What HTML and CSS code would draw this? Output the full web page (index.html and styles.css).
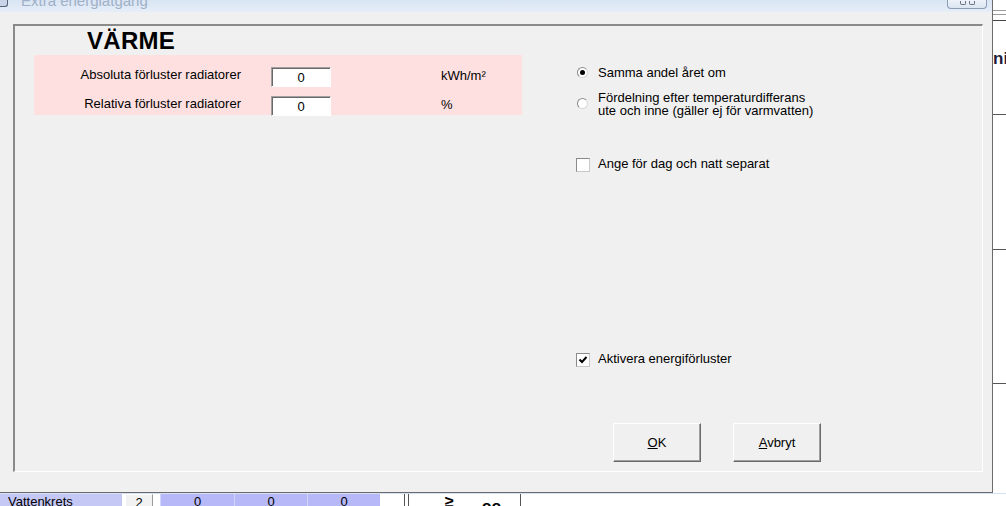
FILE: index.html
```html
<!DOCTYPE html>
<html>

<head>
	<title>Extra energiåtgång</title>
	<link rel="stylesheet" href="styles.css">
</head>

<body>
	<div class="screen">
		<!-- Dialogfönster -->
		<div class="window">
			<div class="titlebar">
				<span class="app-icon"></span>
				<span class="title">Extra energiåtgång</span>
				<span class="close-btn"><span class="close-glyph"></span><span class="close-glyph"></span></span>
			</div>
			<div class="win-body">
				<div class="group">
					<div class="left-col">
						<h1>VÄRME</h1>
						<div class="losses">
							<div class="loss-row">
								<label>Absoluta förluster radiatorer</label>
								<div class="field">0</div>
								<span class="unit">kWh/m²</span>
							</div>
							<div class="loss-row">
								<label>Relativa förluster radiatorer</label>
								<div class="field">0</div>
								<span class="unit">%</span>
							</div>
						</div>
					</div>
					<div class="right-col">
						<div class="opt">
							<span class="radio checked"></span>
							<span>Samma andel året om</span>
						</div>
						<div class="opt opt-two">
							<span class="radio low"></span>
							<span>Fördelning efter temperaturdifferans<br>ute och inne (gäller ej för varmvatten)</span>
						</div>
						<div class="opt opt-day">
							<span class="check"></span>
							<span>Ange för dag och natt separat</span>
						</div>
						<div class="opt opt-active">
							<span class="check">
								<svg width="12" height="12" viewBox="0 0 12 12">
									<path d="M2.5 5.5 L5 8 L9.5 3" fill="none" stroke="#000" stroke-width="2" />
								</svg>
							</span>
							<span>Aktivera energiförluster</span>
						</div>
						<div class="buttons">
							<button class="btn"><u>O</u>K</button>
							<button class="btn"><u>A</u>vbryt</button>
						</div>
					</div>
				</div>
			</div>
		</div>

		<!-- Bakomliggande fönster till höger -->
		<div class="side">
			<div class="side-line l1"></div>
			<div class="side-line l2"></div>
			<div class="side-line l3"></div>
			<div class="side-text">ni</div>
			<div class="side-line l4"></div>
			<div class="side-line l5"></div>
			<div class="side-line l6"></div>
		</div>

		<!-- Bakomliggande tabell nedtill -->
		<div class="taskrow">
			<span class="vk">Vattenkrets</span>
			<span class="two">2</span>
			<span class="zero first">0</span>
			<span class="zero">0</span>
			<span class="zero">0</span>
			<span class="blank"></span>
			<span class="dbl"></span>
			<span class="glyphs"><b class="g1">≥</b><b class="g2">oo</b></span>
		</div>
	</div>
</body>

</html>
```

FILE: styles.css
```css
body {
	margin: 0;
	background-color: #fff;
	font-family: "Liberation Sans", Arial, sans-serif;
	font-size: 13px;
	color: #000;
}

.screen {
	display: grid;
	grid-template-columns: 993px 13px;
	grid-template-rows: 493px 13px;
	width: 1006px;
	height: 506px;
	overflow: hidden;
}

/* Fönstret */
.window {
	display: flex;
	flex-direction: column;
	box-sizing: border-box;
	background-color: #f0f0f0;
	border-right: 1px solid #6b6b6b;
	border-bottom: 1px solid #6b6b6b;
}

.titlebar {
	display: flex;
	align-items: flex-start;
	height: 12px;
	overflow: hidden;
	background: linear-gradient(#d9e5f3, #e6eef8);
}

.app-icon {
	width: 7px;
	height: 6px;
	border-right: 1px solid #58627a;
	border-bottom: 1px solid #58627a;
	border-radius: 0 0 3px 0;
	background-color: #c9d5e6;
}

.title {
	margin-left: 13px;
	margin-top: -7px;
	font-size: 15px;
	line-height: 15px;
	color: #9fb0c8;
}

.close-btn {
	display: flex;
	justify-content: center;
	gap: 3px;
	margin-left: auto;
	margin-right: 5px;
	width: 38px;
	height: 8px;
	border: 1px solid #8c9cb6;
	border-top: none;
	border-radius: 0 0 4px 4px;
	background: linear-gradient(#eef3f9, #dbe4f0);
}

.close-glyph {
	width: 4px;
	height: 3px;
	margin-top: 1px;
	border: 1px solid #6c7484;
	border-top: none;
	border-radius: 0 0 2px 2px;
}

.win-body {
	flex: 1;
	display: flex;
	padding: 12px 9px 20px 13px;
}

/* Ramen runt innehållet */
.group {
	flex: 1;
	display: flex;
	align-items: flex-start;
	border-top: 2px solid #8a8a8a;
	border-left: 2px solid #8a8a8a;
	border-right: 1px solid #fff;
	border-bottom: 1px solid #fff;
}

.left-col {
	margin-left: 19px;
	width: 488px;
}

h1 {
	margin: 3px 0 2px 53px;
	font-size: 24px;
	line-height: 24px;
	letter-spacing: 0.3px;
	font-weight: bold;
}

.losses {
	box-sizing: border-box;
	height: 60px;
	padding-top: 12px;
	background-color: #ffe0e0;
}

.loss-row {
	display: flex;
	align-items: flex-start;
	height: 29px;
}

.loss-row label {
	width: 207px;
	text-align: right;
	line-height: 15px;
}

.field {
	box-sizing: border-box;
	margin-left: 30px;
	width: 60px;
	height: 20px;
	background-color: #fff;
	border: 1px solid;
	border-color: #a0a0a0 #fff #fff #a0a0a0;
	box-shadow: inset 1px 1px 0 #696969;
	text-align: center;
	line-height: 19px;
}

.unit {
	margin-left: 110px;
	padding-top: 1px;
	line-height: 15px;
}

.right-col {
	display: flex;
	flex-direction: column;
	margin-left: 53px;
	padding-top: 40px;
}

.opt {
	display: flex;
	align-items: flex-start;
	line-height: 13px;
}

.opt-two {
	margin-top: 12px;
}

.opt-day {
	margin-top: 40px;
}

.opt-active {
	margin-top: 180px;
}

.radio {
	position: relative;
	box-sizing: border-box;
	flex: none;
	width: 11px;
	height: 11px;
	margin: 1px 10px 0 2px;
	border-radius: 50%;
	background-color: #fff;
	border: 1px solid;
	border-color: #8a8a8a #d8d8d8 #d8d8d8 #8a8a8a;
}

.radio.low {
	margin-top: 7px;
}

.radio.checked::after {
	content: "";
	position: absolute;
	left: 2px;
	top: 2px;
	width: 5px;
	height: 5px;
	border-radius: 50%;
	background-color: #000;
}

.check {
	box-sizing: border-box;
	display: flex;
	flex: none;
	width: 14px;
	height: 14px;
	margin: 1px 8px 0 1px;
	background-color: #fff;
	border: 1px solid;
	border-color: #8a8a8a #c8c8c8 #c8c8c8 #8a8a8a;
}

.buttons {
	display: flex;
	gap: 32px;
	margin-top: 56px;
	margin-left: 38px;
}

.btn {
	box-sizing: border-box;
	width: 88px;
	height: 39px;
	padding: 0;
	background-color: #f0f0f0;
	border: 1px solid;
	border-color: #fff #696969 #696969 #fff;
	box-shadow: inset -1px -1px 0 #a0a0a0;
	font-family: "Liberation Sans", Arial, sans-serif;
	font-size: 13px;
	color: #000;
}

/* Högra kanten */
.side {
	display: flex;
	flex-direction: column;
	background-color: #fff;
}

.side-line {
	height: 1px;
	background-color: #555;
}

.l1 {
	margin-top: 10px;
	background-color: #9a9a9a;
}

.l2 {
	margin-top: 3px;
	background-color: #9a9a9a;
}

.l3 {
	margin-top: 5px;
	background-color: #444;
}

.side-text {
	margin-top: 28px;
	font-size: 17px;
	line-height: 20px;
	font-weight: bold;
	color: #1c1c3a;
	white-space: nowrap;
}

.l4 {
	margin-top: 45px;
}

.l5 {
	margin-top: 134px;
}

.l6 {
	margin-top: 133px;
}

/* Tabellraden nedtill */
.taskrow {
	grid-column: 1 / span 2;
	display: flex;
	align-items: flex-start;
	overflow: hidden;
	background-color: #fff;
	border-top: 1px solid #d5e0f2;
	line-height: 15px;
}

.vk {
	box-sizing: border-box;
	width: 122px;
	height: 15px;
	padding-left: 8px;
	background-color: #c5c7f5;
}

.two {
	box-sizing: border-box;
	width: 28px;
	height: 15px;
	margin-left: 3px;
	background-color: #f2f2f2;
	border-top: 1px solid #fff;
	border-left: 1px solid #fff;
	border-right: 1px solid #9a9a9a;
	text-align: center;
}

.zero {
	box-sizing: border-box;
	width: 73px;
	height: 15px;
	background-color: #b6b8f8;
	border-left: 1px solid #d4d5fc;
	text-align: center;
}

.zero.first {
	margin-left: 7px;
	width: 74px;
}

.blank {
	width: 24px;
}

.dbl {
	box-sizing: border-box;
	width: 5px;
	height: 15px;
	border-left: 1px solid #555;
	border-right: 1px solid #555;
}

.glyphs {
	box-sizing: border-box;
	display: flex;
	width: 112px;
	height: 15px;
	border-right: 1px solid #555;
	font-size: 16px;
}

.g1 {
	margin-left: 36px;
}

.g2 {
	margin-left: 28px;
	margin-top: 5px;
}
```
